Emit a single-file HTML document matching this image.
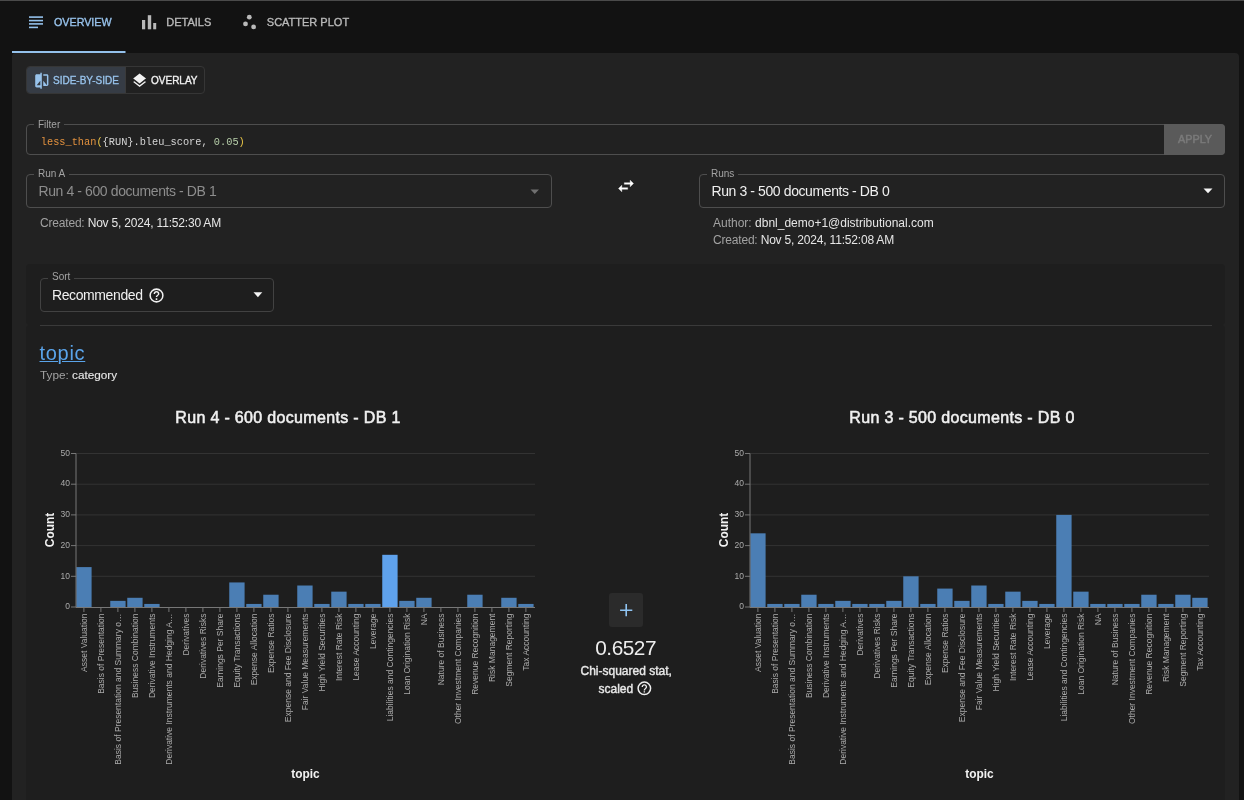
<!DOCTYPE html>
<html><head><meta charset="utf-8">
<style>
*{box-sizing:border-box;margin:0;padding:0}
html,body{width:1244px;height:800px;overflow:hidden;background:#121212;font-family:"Liberation Sans",sans-serif;color:#e6e6e6}
.a{position:absolute;white-space:nowrap}
.topline{position:absolute;left:0;top:0;width:1244px;height:1px;background:#4a4a4a}
.tab{position:absolute;top:15.5px;font-size:11px;line-height:12px;color:#b9b9b9;-webkit-text-stroke:0.35px currentColor;transform-origin:0 0}
.panel{position:absolute;left:12px;top:53px;width:1227px;height:760px;background:#222222;border-radius:4px}
.field{position:absolute;border:1px solid #4e4e4e;border-radius:4px}
.flabel{position:absolute;font-size:10px;line-height:10px;color:#a3a3a3;padding:0 4px;background:#222222}
.val{position:absolute;font-size:14px;line-height:14px;letter-spacing:-0.4px}
.small{position:absolute;font-size:12px;line-height:12px}
.gray{color:#a2a2a2}
.inner{position:absolute;left:26px;top:264px;width:1199px;height:560px;background:#1e1e1e;border-radius:4px}
svg text.lab{font-family:"Liberation Sans",sans-serif;font-size:8.5px;fill:#ababab}
svg text.ttl{font-family:"Liberation Sans",sans-serif;font-size:11.9px;font-weight:bold;fill:#f2f2f2}
svg text.ctitle{font-family:"Liberation Sans",sans-serif;font-size:16px;letter-spacing:0.33px;fill:#f0f0f0;stroke:#f0f0f0;stroke-width:0.55px}
</style></head>
<body>
<div id="wrap" style="position:absolute;left:0;top:0;width:1244px;height:800px;overflow:hidden;background:#121212;will-change:transform">
<div class="topline"></div>

<!-- tabs -->
<svg class="a" style="left:0;top:0" width="400" height="53">
  <g fill="#94c1eb">
    <rect x="29" y="16.3" width="14" height="1.6"/>
    <rect x="29" y="19.8" width="14" height="1.6"/>
    <rect x="29" y="23.1" width="14" height="1.6"/>
    <rect x="29" y="26.6" width="9" height="1.6"/>
  </g>
  <g fill="#b9b9b9">
    <rect x="142" y="20" width="3.2" height="9.3"/>
    <rect x="147.8" y="15.2" width="3.4" height="14.1"/>
    <rect x="153.2" y="23" width="3" height="6.3"/>
    <circle cx="249.3" cy="17.2" r="2.4"/>
    <circle cx="245.5" cy="23.9" r="2.4"/>
    <circle cx="253.6" cy="26.9" r="2.4"/>
  </g>
  <rect x="12" y="51" width="113.5" height="2" fill="#94c1eb"/>
</svg>
<div class="tab" style="left:53.8px;color:#98c3ec;transform:scaleX(0.975)">OVERVIEW</div>
<div class="tab" style="left:166.3px">DETAILS</div>
<div class="tab" style="left:266.8px">SCATTER PLOT</div>

<div class="panel"></div>

<!-- toggle group -->
<div class="a" style="left:26px;top:66px;width:179px;height:28px;border:1px solid #363636;border-radius:4px;background:#212121;overflow:hidden">
  <div class="a" style="left:0;top:0;width:98px;height:26px;background:#363c45"></div><div class="a" style="left:98px;top:0;width:1px;height:26px;background:#3a3a3a"></div>
</div>
<svg class="a" style="left:32.5px;top:71.6px" width="17.6" height="17.6" viewBox="0 0 24 24"><path fill="#98c3ec" d="M10 3H5c-1.11 0-2 .9-2 2v14c0 1.1.89 2 2 2h5v2h2V1h-2v2zm0 15H5l5-6v6zm9-15h-5v2h5v13l-5-6v7h5c1.1 0 2-.9 2-2V5c0-1.1-.9-2-2-2z"/></svg>
<svg class="a" style="left:131.4px;top:72.0px" width="17.2" height="17.2" viewBox="0 0 24 24"><path fill="#f2f2f2" d="M11.99 18.54l-7.37-5.73L3 14.07l9 7 9-7-1.63-1.27-7.38 5.74zM12 16l7.36-5.73L21 9l-9-7-9 7 1.63 1.27L12 16z"/></svg>
<div class="a" style="left:52.6px;top:75px;font-size:11px;line-height:11px;color:#98c3ec;-webkit-text-stroke:0.35px currentColor;transform-origin:0 0;transform:scaleX(0.91)">SIDE-BY-SIDE</div>
<div class="a" style="left:151px;top:75px;font-size:11px;line-height:11px;color:#f2f2f2;-webkit-text-stroke:0.35px currentColor;transform-origin:0 0;transform:scaleX(0.91)">OVERLAY</div>

<!-- filter -->
<div class="field" style="left:26px;top:124px;width:1199px;height:31px;background:#212121"></div>
<div class="flabel" style="left:34px;top:120px">Filter</div>
<div class="a" style="left:40.8px;top:137px;font-family:'Liberation Mono',monospace;font-size:10.3px;line-height:11px;color:#d4d4d4"><span style="color:#e2913e">less_than</span><span style="color:#e8c547">(</span>{RUN}.bleu_score, <span style="color:#b5cda8">0.05</span><span style="color:#e8c547">)</span></div>
<div class="a" style="left:1164px;top:124px;width:61px;height:31px;background:#5a5a5a;border-radius:0 4px 4px 0"></div>
<div class="a" style="left:1177.7px;top:134px;font-size:11.4px;line-height:11px;color:#7a7a7a;-webkit-text-stroke:0.5px currentColor;transform-origin:0 0;transform:scaleX(0.95)">APPLY</div>

<!-- run A -->
<div class="field" style="left:26px;top:174px;width:526px;height:34px"></div>
<div class="flabel" style="left:34px;top:169px">Run A</div>
<div class="val" style="left:38.5px;top:183.5px;color:#8d8d8d">Run 4 - 600 documents - DB 1</div>
<svg class="a" style="left:528.5px;top:187.5px" width="12" height="8"><path d="M1.5 1.5h8.5l-4.25 4.5z" fill="#707070"/></svg>
<div class="small" style="left:40px;top:217px;letter-spacing:-0.19px"><span class="gray">Created:</span> Nov 5, 2024, 11:52:30 AM</div>

<!-- swap -->
<svg class="a" style="left:615.5px;top:175.9px" width="20" height="20" viewBox="0 0 24 24"><path fill="#fff" stroke="#fff" stroke-width="0.45" stroke-linejoin="miter" d="M6.99 11L3 15l3.99 4v-3H14v-2H6.99v-3zM21 9l-3.99-4v3H10v2h7.01v3L21 9z"/></svg>

<!-- runs -->
<div class="field" style="left:699px;top:174px;width:526px;height:34px"></div>
<div class="flabel" style="left:707px;top:169px">Runs</div>
<div class="val" style="left:711.5px;top:183.5px;color:#f0f0f0">Run 3 - 500 documents - DB 0</div>
<svg class="a" style="left:1201.5px;top:187.3px" width="12" height="8"><path d="M1.5 1.5h9l-4.5 4.8z" fill="#f5f5f5"/></svg>
<div class="small" style="left:713px;top:217px;letter-spacing:0px"><span class="gray">Author:</span> dbnl_demo+1@distributional.com</div>
<div class="small" style="left:713px;top:234px;letter-spacing:-0.19px"><span class="gray">Created:</span> Nov 5, 2024, 11:52:08 AM</div>

<!-- inner section -->
<div class="inner" style="height:61px"></div><div class="inner" style="top:325px;height:520px"></div>
<div class="field" style="left:39.5px;top:278px;width:234.5px;height:33.5px;border-color:#424242"></div>
<div class="flabel" style="left:48px;top:272px;background:#1e1e1e">Sort</div>
<div class="val" style="left:52px;top:288px;color:#f0f0f0">Recommended</div>
<svg class="a" style="left:147.6px;top:286.8px" width="17" height="17" viewBox="0 0 24 24"><circle cx="12" cy="12" r="9" fill="none" stroke="#f0f0f0" stroke-width="2.15"/><path fill="#f0f0f0" d="M10.9 18.2h2.2v-2.2h-2.2z M12 5.8c-2.3 0-4.1 1.8-4.1 4.1h2.1c0-1.1.9-2 2-2s2 .9 2 2c0 1.9-3.05 1.7-3.05 4.3h2.1c0-2 3.05-2.3 3.05-4.3 0-2.3-1.8-4.1-4.1-4.1z"/></svg>
<svg class="a" style="left:252px;top:290px" width="12" height="8"><path d="M1.5 2.2h8.8l-4.4 5z" fill="#f5f5f5"/></svg>
<div class="a" style="left:40px;top:325px;width:1172px;height:1px;background:#3a3a3a"></div>

<div class="a" style="left:39.5px;top:342px;font-size:20px;line-height:22px;color:#5aa4ea;letter-spacing:0.7px;text-decoration:underline;text-decoration-thickness:1.4px;text-underline-offset:1.2px">topic</div>
<div class="small" style="left:40px;top:369px;font-size:11.75px"><span class="gray">Type:</span> <span style="-webkit-text-stroke:0.12px currentColor">category</span></div>

<!-- middle stat -->
<div class="a" style="left:609px;top:593px;width:34px;height:34px;background:#2b2b2b;border-radius:3px"></div>
<svg class="a" style="left:608.6px;top:593px" width="34" height="34"><path d="M16.4 11.1h1.6v12.2h-1.6z M11.1 16.4h12.2v1.6h-12.2z" fill="#8fc4f2"/></svg>
<div class="a" style="left:595.2px;top:638px;font-size:20.8px;line-height:20px;color:#eeeeee;letter-spacing:-0.45px">0.6527</div>
<div class="a" style="left:580.5px;top:665px;font-size:12px;line-height:12px;color:#e8e8e8;-webkit-text-stroke:0.4px currentColor">Chi-squared stat,</div>
<div class="a" style="left:598.5px;top:683px;font-size:12px;line-height:12px;color:#e8e8e8;-webkit-text-stroke:0.4px currentColor">scaled</div>
<svg class="a" style="left:636.2px;top:680.3px" width="16.7" height="16.7" viewBox="0 0 24 24"><circle cx="12" cy="12" r="9" fill="none" stroke="#eeeeee" stroke-width="2.15"/><path fill="#eeeeee" d="M11 18h2v-2h-2v2z M12 6c-2.21 0-4 1.79-4 4h2c0-1.1.9-2 2-2s2 .9 2 2c0 2-3 1.75-3 5h2c0-2.25 3-2.5 3-5 0-2.210-1.79-4-4-4z"/></svg>

<!-- charts -->
<svg class="a" style="left:0;top:0" width="1244" height="800">
<line x1="76" y1="576.3" x2="535.0" y2="576.3" stroke="#333" stroke-width="1"/>
<line x1="76" y1="545.6" x2="535.0" y2="545.6" stroke="#333" stroke-width="1"/>
<line x1="76" y1="514.9" x2="535.0" y2="514.9" stroke="#333" stroke-width="1"/>
<line x1="76" y1="484.2" x2="535.0" y2="484.2" stroke="#333" stroke-width="1"/>
<line x1="76" y1="453.5" x2="535.0" y2="453.5" stroke="#333" stroke-width="1"/>
<rect x="76.25" y="567.09" width="15.35" height="39.91" fill="#4b7eb4"/>
<rect x="110.25" y="600.86" width="15.35" height="6.14" fill="#4b7eb4"/>
<rect x="127.25" y="597.79" width="15.35" height="9.21" fill="#4b7eb4"/>
<rect x="144.25" y="603.93" width="15.35" height="3.07" fill="#4b7eb4"/>
<rect x="229.25" y="582.44" width="15.35" height="24.56" fill="#4b7eb4"/>
<rect x="246.25" y="603.93" width="15.35" height="3.07" fill="#4b7eb4"/>
<rect x="263.25" y="594.72" width="15.35" height="12.28" fill="#4b7eb4"/>
<rect x="297.25" y="585.51" width="15.35" height="21.49" fill="#4b7eb4"/>
<rect x="314.25" y="603.93" width="15.35" height="3.07" fill="#4b7eb4"/>
<rect x="331.25" y="591.65" width="15.35" height="15.35" fill="#4b7eb4"/>
<rect x="348.25" y="603.93" width="15.35" height="3.07" fill="#4b7eb4"/>
<rect x="365.25" y="603.93" width="15.35" height="3.07" fill="#4b7eb4"/>
<rect x="382.25" y="554.81" width="15.35" height="52.19" fill="#5fa2ec"/>
<rect x="399.25" y="600.86" width="15.35" height="6.14" fill="#4b7eb4"/>
<rect x="416.25" y="597.79" width="15.35" height="9.21" fill="#4b7eb4"/>
<rect x="467.25" y="594.72" width="15.35" height="12.28" fill="#4b7eb4"/>
<rect x="501.25" y="597.79" width="15.35" height="9.21" fill="#4b7eb4"/>
<rect x="518.25" y="603.93" width="15.35" height="3.07" fill="#4b7eb4"/>
<line x1="76" y1="453.5" x2="76" y2="607.5" stroke="#777" stroke-width="1"/>
<line x1="76" y1="607.5" x2="535.0" y2="607.5" stroke="#777" stroke-width="1"/>
<line x1="71" y1="607.0" x2="76" y2="607.0" stroke="#777" stroke-width="1"/>
<text x="70" y="609.2" text-anchor="end" class="lab">0</text>
<line x1="71" y1="576.3" x2="76" y2="576.3" stroke="#777" stroke-width="1"/>
<text x="70" y="578.5" text-anchor="end" class="lab">10</text>
<line x1="71" y1="545.6" x2="76" y2="545.6" stroke="#777" stroke-width="1"/>
<text x="70" y="547.8" text-anchor="end" class="lab">20</text>
<line x1="71" y1="514.9" x2="76" y2="514.9" stroke="#777" stroke-width="1"/>
<text x="70" y="517.1" text-anchor="end" class="lab">30</text>
<line x1="71" y1="484.2" x2="76" y2="484.2" stroke="#777" stroke-width="1"/>
<text x="70" y="486.4" text-anchor="end" class="lab">40</text>
<line x1="71" y1="453.5" x2="76" y2="453.5" stroke="#777" stroke-width="1"/>
<text x="70" y="455.7" text-anchor="end" class="lab">50</text>
<line x1="83.9" y1="607.5" x2="83.9" y2="612.0" stroke="#777" stroke-width="1"/>
<text transform="translate(86.5,613.5) rotate(-90)" text-anchor="end" class="lab">Asset Valuation</text>
<line x1="100.9" y1="607.5" x2="100.9" y2="612.0" stroke="#777" stroke-width="1"/>
<text transform="translate(103.5,613.5) rotate(-90)" text-anchor="end" class="lab">Basis of Presentation</text>
<line x1="117.9" y1="607.5" x2="117.9" y2="612.0" stroke="#777" stroke-width="1"/>
<text transform="translate(120.5,613.5) rotate(-90)" text-anchor="end" class="lab">Basis of Presentation and Summary o…</text>
<line x1="134.9" y1="607.5" x2="134.9" y2="612.0" stroke="#777" stroke-width="1"/>
<text transform="translate(137.5,613.5) rotate(-90)" text-anchor="end" class="lab">Business Combination</text>
<line x1="151.9" y1="607.5" x2="151.9" y2="612.0" stroke="#777" stroke-width="1"/>
<text transform="translate(154.5,613.5) rotate(-90)" text-anchor="end" class="lab">Derivative Instruments</text>
<line x1="168.9" y1="607.5" x2="168.9" y2="612.0" stroke="#777" stroke-width="1"/>
<text transform="translate(171.5,613.5) rotate(-90)" text-anchor="end" class="lab">Derivative Instruments and Hedging A…</text>
<line x1="185.9" y1="607.5" x2="185.9" y2="612.0" stroke="#777" stroke-width="1"/>
<text transform="translate(188.5,613.5) rotate(-90)" text-anchor="end" class="lab">Derivatives</text>
<line x1="202.9" y1="607.5" x2="202.9" y2="612.0" stroke="#777" stroke-width="1"/>
<text transform="translate(205.5,613.5) rotate(-90)" text-anchor="end" class="lab">Derivatives Risks</text>
<line x1="219.9" y1="607.5" x2="219.9" y2="612.0" stroke="#777" stroke-width="1"/>
<text transform="translate(222.5,613.5) rotate(-90)" text-anchor="end" class="lab">Earnings Per Share</text>
<line x1="236.9" y1="607.5" x2="236.9" y2="612.0" stroke="#777" stroke-width="1"/>
<text transform="translate(239.5,613.5) rotate(-90)" text-anchor="end" class="lab">Equity Transactions</text>
<line x1="253.9" y1="607.5" x2="253.9" y2="612.0" stroke="#777" stroke-width="1"/>
<text transform="translate(256.5,613.5) rotate(-90)" text-anchor="end" class="lab">Expense Allocation</text>
<line x1="270.9" y1="607.5" x2="270.9" y2="612.0" stroke="#777" stroke-width="1"/>
<text transform="translate(273.5,613.5) rotate(-90)" text-anchor="end" class="lab">Expense Ratios</text>
<line x1="287.9" y1="607.5" x2="287.9" y2="612.0" stroke="#777" stroke-width="1"/>
<text transform="translate(290.5,613.5) rotate(-90)" text-anchor="end" class="lab">Expense and Fee Disclosure</text>
<line x1="304.9" y1="607.5" x2="304.9" y2="612.0" stroke="#777" stroke-width="1"/>
<text transform="translate(307.5,613.5) rotate(-90)" text-anchor="end" class="lab">Fair Value Measurements</text>
<line x1="321.9" y1="607.5" x2="321.9" y2="612.0" stroke="#777" stroke-width="1"/>
<text transform="translate(324.5,613.5) rotate(-90)" text-anchor="end" class="lab">High Yield Securities</text>
<line x1="338.9" y1="607.5" x2="338.9" y2="612.0" stroke="#777" stroke-width="1"/>
<text transform="translate(341.5,613.5) rotate(-90)" text-anchor="end" class="lab">Interest Rate Risk</text>
<line x1="355.9" y1="607.5" x2="355.9" y2="612.0" stroke="#777" stroke-width="1"/>
<text transform="translate(358.5,613.5) rotate(-90)" text-anchor="end" class="lab">Lease Accounting</text>
<line x1="372.9" y1="607.5" x2="372.9" y2="612.0" stroke="#777" stroke-width="1"/>
<text transform="translate(375.5,613.5) rotate(-90)" text-anchor="end" class="lab">Leverage</text>
<line x1="389.9" y1="607.5" x2="389.9" y2="612.0" stroke="#777" stroke-width="1"/>
<text transform="translate(392.5,613.5) rotate(-90)" text-anchor="end" class="lab">Liabilities and Contingencies</text>
<line x1="406.9" y1="607.5" x2="406.9" y2="612.0" stroke="#777" stroke-width="1"/>
<text transform="translate(409.5,613.5) rotate(-90)" text-anchor="end" class="lab">Loan Origination Risk</text>
<line x1="423.9" y1="607.5" x2="423.9" y2="612.0" stroke="#777" stroke-width="1"/>
<text transform="translate(426.5,613.5) rotate(-90)" text-anchor="end" class="lab">NA</text>
<line x1="440.9" y1="607.5" x2="440.9" y2="612.0" stroke="#777" stroke-width="1"/>
<text transform="translate(443.5,613.5) rotate(-90)" text-anchor="end" class="lab">Nature of Business</text>
<line x1="457.9" y1="607.5" x2="457.9" y2="612.0" stroke="#777" stroke-width="1"/>
<text transform="translate(460.5,613.5) rotate(-90)" text-anchor="end" class="lab">Other Investment Companies</text>
<line x1="474.9" y1="607.5" x2="474.9" y2="612.0" stroke="#777" stroke-width="1"/>
<text transform="translate(477.5,613.5) rotate(-90)" text-anchor="end" class="lab">Revenue Recognition</text>
<line x1="491.9" y1="607.5" x2="491.9" y2="612.0" stroke="#777" stroke-width="1"/>
<text transform="translate(494.5,613.5) rotate(-90)" text-anchor="end" class="lab">Risk Management</text>
<line x1="508.9" y1="607.5" x2="508.9" y2="612.0" stroke="#777" stroke-width="1"/>
<text transform="translate(511.5,613.5) rotate(-90)" text-anchor="end" class="lab">Segment Reporting</text>
<line x1="525.9" y1="607.5" x2="525.9" y2="612.0" stroke="#777" stroke-width="1"/>
<text transform="translate(528.5,613.5) rotate(-90)" text-anchor="end" class="lab">Tax Accounting</text>
<text transform="translate(54,530.0) rotate(-90)" text-anchor="middle" class="ttl">Count</text>
<text x="305.5" y="778" text-anchor="middle" class="ttl">topic</text>
<text x="288" y="422.8" text-anchor="middle" class="ctitle">Run 4 - 600 documents - DB 1</text>
<line x1="750" y1="576.3" x2="1209.0" y2="576.3" stroke="#333" stroke-width="1"/>
<line x1="750" y1="545.6" x2="1209.0" y2="545.6" stroke="#333" stroke-width="1"/>
<line x1="750" y1="514.9" x2="1209.0" y2="514.9" stroke="#333" stroke-width="1"/>
<line x1="750" y1="484.2" x2="1209.0" y2="484.2" stroke="#333" stroke-width="1"/>
<line x1="750" y1="453.5" x2="1209.0" y2="453.5" stroke="#333" stroke-width="1"/>
<rect x="750.25" y="533.32" width="15.35" height="73.68" fill="#4b7eb4"/>
<rect x="767.25" y="603.93" width="15.35" height="3.07" fill="#4b7eb4"/>
<rect x="784.25" y="603.93" width="15.35" height="3.07" fill="#4b7eb4"/>
<rect x="801.25" y="594.72" width="15.35" height="12.28" fill="#4b7eb4"/>
<rect x="818.25" y="603.93" width="15.35" height="3.07" fill="#4b7eb4"/>
<rect x="835.25" y="600.86" width="15.35" height="6.14" fill="#4b7eb4"/>
<rect x="852.25" y="603.93" width="15.35" height="3.07" fill="#4b7eb4"/>
<rect x="869.25" y="603.93" width="15.35" height="3.07" fill="#4b7eb4"/>
<rect x="886.25" y="600.86" width="15.35" height="6.14" fill="#4b7eb4"/>
<rect x="903.25" y="576.30" width="15.35" height="30.70" fill="#4b7eb4"/>
<rect x="920.25" y="603.93" width="15.35" height="3.07" fill="#4b7eb4"/>
<rect x="937.25" y="588.58" width="15.35" height="18.42" fill="#4b7eb4"/>
<rect x="954.25" y="600.86" width="15.35" height="6.14" fill="#4b7eb4"/>
<rect x="971.25" y="585.51" width="15.35" height="21.49" fill="#4b7eb4"/>
<rect x="988.25" y="603.93" width="15.35" height="3.07" fill="#4b7eb4"/>
<rect x="1005.25" y="591.65" width="15.35" height="15.35" fill="#4b7eb4"/>
<rect x="1022.25" y="600.86" width="15.35" height="6.14" fill="#4b7eb4"/>
<rect x="1039.25" y="603.93" width="15.35" height="3.07" fill="#4b7eb4"/>
<rect x="1056.25" y="514.90" width="15.35" height="92.10" fill="#4b7eb4"/>
<rect x="1073.25" y="591.65" width="15.35" height="15.35" fill="#4b7eb4"/>
<rect x="1090.25" y="603.93" width="15.35" height="3.07" fill="#4b7eb4"/>
<rect x="1107.25" y="603.93" width="15.35" height="3.07" fill="#4b7eb4"/>
<rect x="1124.25" y="603.93" width="15.35" height="3.07" fill="#4b7eb4"/>
<rect x="1141.25" y="594.72" width="15.35" height="12.28" fill="#4b7eb4"/>
<rect x="1158.25" y="603.93" width="15.35" height="3.07" fill="#4b7eb4"/>
<rect x="1175.25" y="594.72" width="15.35" height="12.28" fill="#4b7eb4"/>
<rect x="1192.25" y="597.79" width="15.35" height="9.21" fill="#4b7eb4"/>
<line x1="750" y1="453.5" x2="750" y2="607.5" stroke="#777" stroke-width="1"/>
<line x1="750" y1="607.5" x2="1209.0" y2="607.5" stroke="#777" stroke-width="1"/>
<line x1="745" y1="607.0" x2="750" y2="607.0" stroke="#777" stroke-width="1"/>
<text x="744" y="609.2" text-anchor="end" class="lab">0</text>
<line x1="745" y1="576.3" x2="750" y2="576.3" stroke="#777" stroke-width="1"/>
<text x="744" y="578.5" text-anchor="end" class="lab">10</text>
<line x1="745" y1="545.6" x2="750" y2="545.6" stroke="#777" stroke-width="1"/>
<text x="744" y="547.8" text-anchor="end" class="lab">20</text>
<line x1="745" y1="514.9" x2="750" y2="514.9" stroke="#777" stroke-width="1"/>
<text x="744" y="517.1" text-anchor="end" class="lab">30</text>
<line x1="745" y1="484.2" x2="750" y2="484.2" stroke="#777" stroke-width="1"/>
<text x="744" y="486.4" text-anchor="end" class="lab">40</text>
<line x1="745" y1="453.5" x2="750" y2="453.5" stroke="#777" stroke-width="1"/>
<text x="744" y="455.7" text-anchor="end" class="lab">50</text>
<line x1="757.9" y1="607.5" x2="757.9" y2="612.0" stroke="#777" stroke-width="1"/>
<text transform="translate(760.5,613.5) rotate(-90)" text-anchor="end" class="lab">Asset Valuation</text>
<line x1="774.9" y1="607.5" x2="774.9" y2="612.0" stroke="#777" stroke-width="1"/>
<text transform="translate(777.5,613.5) rotate(-90)" text-anchor="end" class="lab">Basis of Presentation</text>
<line x1="791.9" y1="607.5" x2="791.9" y2="612.0" stroke="#777" stroke-width="1"/>
<text transform="translate(794.5,613.5) rotate(-90)" text-anchor="end" class="lab">Basis of Presentation and Summary o…</text>
<line x1="808.9" y1="607.5" x2="808.9" y2="612.0" stroke="#777" stroke-width="1"/>
<text transform="translate(811.5,613.5) rotate(-90)" text-anchor="end" class="lab">Business Combination</text>
<line x1="825.9" y1="607.5" x2="825.9" y2="612.0" stroke="#777" stroke-width="1"/>
<text transform="translate(828.5,613.5) rotate(-90)" text-anchor="end" class="lab">Derivative Instruments</text>
<line x1="842.9" y1="607.5" x2="842.9" y2="612.0" stroke="#777" stroke-width="1"/>
<text transform="translate(845.5,613.5) rotate(-90)" text-anchor="end" class="lab">Derivative Instruments and Hedging A…</text>
<line x1="859.9" y1="607.5" x2="859.9" y2="612.0" stroke="#777" stroke-width="1"/>
<text transform="translate(862.5,613.5) rotate(-90)" text-anchor="end" class="lab">Derivatives</text>
<line x1="876.9" y1="607.5" x2="876.9" y2="612.0" stroke="#777" stroke-width="1"/>
<text transform="translate(879.5,613.5) rotate(-90)" text-anchor="end" class="lab">Derivatives Risks</text>
<line x1="893.9" y1="607.5" x2="893.9" y2="612.0" stroke="#777" stroke-width="1"/>
<text transform="translate(896.5,613.5) rotate(-90)" text-anchor="end" class="lab">Earnings Per Share</text>
<line x1="910.9" y1="607.5" x2="910.9" y2="612.0" stroke="#777" stroke-width="1"/>
<text transform="translate(913.5,613.5) rotate(-90)" text-anchor="end" class="lab">Equity Transactions</text>
<line x1="927.9" y1="607.5" x2="927.9" y2="612.0" stroke="#777" stroke-width="1"/>
<text transform="translate(930.5,613.5) rotate(-90)" text-anchor="end" class="lab">Expense Allocation</text>
<line x1="944.9" y1="607.5" x2="944.9" y2="612.0" stroke="#777" stroke-width="1"/>
<text transform="translate(947.5,613.5) rotate(-90)" text-anchor="end" class="lab">Expense Ratios</text>
<line x1="961.9" y1="607.5" x2="961.9" y2="612.0" stroke="#777" stroke-width="1"/>
<text transform="translate(964.5,613.5) rotate(-90)" text-anchor="end" class="lab">Expense and Fee Disclosure</text>
<line x1="978.9" y1="607.5" x2="978.9" y2="612.0" stroke="#777" stroke-width="1"/>
<text transform="translate(981.5,613.5) rotate(-90)" text-anchor="end" class="lab">Fair Value Measurements</text>
<line x1="995.9" y1="607.5" x2="995.9" y2="612.0" stroke="#777" stroke-width="1"/>
<text transform="translate(998.5,613.5) rotate(-90)" text-anchor="end" class="lab">High Yield Securities</text>
<line x1="1012.9" y1="607.5" x2="1012.9" y2="612.0" stroke="#777" stroke-width="1"/>
<text transform="translate(1015.5,613.5) rotate(-90)" text-anchor="end" class="lab">Interest Rate Risk</text>
<line x1="1029.9" y1="607.5" x2="1029.9" y2="612.0" stroke="#777" stroke-width="1"/>
<text transform="translate(1032.5,613.5) rotate(-90)" text-anchor="end" class="lab">Lease Accounting</text>
<line x1="1046.9" y1="607.5" x2="1046.9" y2="612.0" stroke="#777" stroke-width="1"/>
<text transform="translate(1049.5,613.5) rotate(-90)" text-anchor="end" class="lab">Leverage</text>
<line x1="1063.9" y1="607.5" x2="1063.9" y2="612.0" stroke="#777" stroke-width="1"/>
<text transform="translate(1066.5,613.5) rotate(-90)" text-anchor="end" class="lab">Liabilities and Contingencies</text>
<line x1="1080.9" y1="607.5" x2="1080.9" y2="612.0" stroke="#777" stroke-width="1"/>
<text transform="translate(1083.5,613.5) rotate(-90)" text-anchor="end" class="lab">Loan Origination Risk</text>
<line x1="1097.9" y1="607.5" x2="1097.9" y2="612.0" stroke="#777" stroke-width="1"/>
<text transform="translate(1100.5,613.5) rotate(-90)" text-anchor="end" class="lab">NA</text>
<line x1="1114.9" y1="607.5" x2="1114.9" y2="612.0" stroke="#777" stroke-width="1"/>
<text transform="translate(1117.5,613.5) rotate(-90)" text-anchor="end" class="lab">Nature of Business</text>
<line x1="1131.9" y1="607.5" x2="1131.9" y2="612.0" stroke="#777" stroke-width="1"/>
<text transform="translate(1134.5,613.5) rotate(-90)" text-anchor="end" class="lab">Other Investment Companies</text>
<line x1="1148.9" y1="607.5" x2="1148.9" y2="612.0" stroke="#777" stroke-width="1"/>
<text transform="translate(1151.5,613.5) rotate(-90)" text-anchor="end" class="lab">Revenue Recognition</text>
<line x1="1165.9" y1="607.5" x2="1165.9" y2="612.0" stroke="#777" stroke-width="1"/>
<text transform="translate(1168.5,613.5) rotate(-90)" text-anchor="end" class="lab">Risk Management</text>
<line x1="1182.9" y1="607.5" x2="1182.9" y2="612.0" stroke="#777" stroke-width="1"/>
<text transform="translate(1185.5,613.5) rotate(-90)" text-anchor="end" class="lab">Segment Reporting</text>
<line x1="1199.9" y1="607.5" x2="1199.9" y2="612.0" stroke="#777" stroke-width="1"/>
<text transform="translate(1202.5,613.5) rotate(-90)" text-anchor="end" class="lab">Tax Accounting</text>
<text transform="translate(728,530.0) rotate(-90)" text-anchor="middle" class="ttl">Count</text>
<text x="979.5" y="778" text-anchor="middle" class="ttl">topic</text>
<text x="962" y="422.8" text-anchor="middle" class="ctitle">Run 3 - 500 documents - DB 0</text>
</svg>
</div>
</body></html>
